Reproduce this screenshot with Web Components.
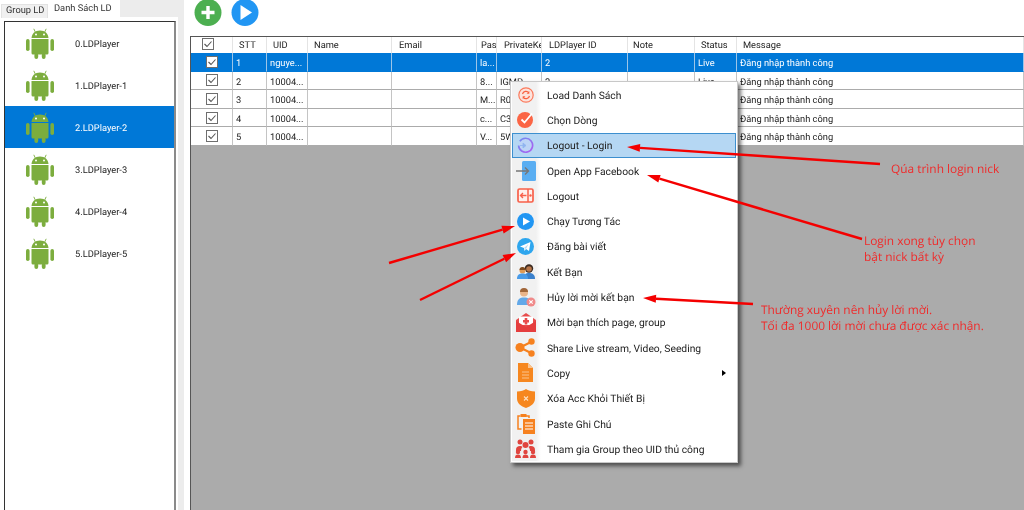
<!DOCTYPE html>
<html>
<head>
<meta charset="utf-8">
<style>
  html, body { margin: 0; height: 100%; overflow: hidden; background: #fff; }
  body { font: 9.3px Roboto, "Liberation Sans", sans-serif; color: #222; text-rendering: geometricPrecision; }
</style>
</head>
<body>
<app-window></app-window>
<template id="android">
  <svg width="28" height="31" viewBox="0 0 28 31" fill="#7cad3e">
    <rect x="0" y="11" width="3.6" height="12" rx="1.8"/>
    <rect x="24.4" y="11" width="3.6" height="12" rx="1.8"/>
    <path d="M5.500 11h17v14a1.500 1.500 0 0 1-1.500 1.500H7A1.500 1.500 0 0 1 5.500 25z"/>
    <rect x="8.4" y="25" width="3.8" height="6" rx="1.9"/>
    <rect x="15.8" y="25" width="3.8" height="6" rx="1.9"/>
    <path d="M5.500 10C5.800 5.500 9 2.500 14 2.500S22.200 5.500 22.500 10z"/>
    <path d="M9.500 4.500 7.800.8M18.500 4.500 20.200.8" stroke="#7cad3e" stroke-width=".9"/>
    <circle cx="10" cy="6.500" r="1" fill="#fff"/><circle cx="18" cy="6.500" r="1" fill="#fff"/>
  </svg>
</template>
<script>
const css = (s) => `<style>${s}</style>`;
const tick = `<svg width="12" height="12" viewBox="0 0 12 12"><rect x=".5" y=".5" width="11" height="11" fill="#fff" stroke="#6e6e6e"/><path d="M2.500 6l2.500 2.500 4.500-5" fill="none" stroke="#555" stroke-width="1.100"/></svg>`;

class LdItem extends HTMLElement {
  connectedCallback() {
    const root = this.attachShadow({ mode: "open" });
    root.innerHTML = css(`
      :host { display: grid; grid-template-columns: 70px 1fr; align-items: center; height: 42px; color: #222; }
      :host([selected]) { background: #0078d7; color: #fff; }
      .ic { display: grid; place-items: center; padding-right: 1px; line-height: 0; }
      .t { padding-top: 2px; }
    `) + `<div class="ic"></div><div class="t"><slot></slot></div>`;
    root.querySelector(".ic").appendChild(document.getElementById("android").content.cloneNode(true));
  }
}
customElements.define("ld-item", LdItem);

class LdSidebar extends HTMLElement {
  connectedCallback() {
    const root = this.attachShadow({ mode: "open" });
    root.innerHTML = css(`
      :host { display: flex; flex-direction: column; width: 178px; background: #fff; flex: none; }
      .tabs { display: flex; align-items: flex-end; height: 18px; background: #fff; flex: none; padding-left: 1px; }
      .tab { height: 14px; width: 47px; box-sizing: border-box; line-height: 12px; padding: 0 4px; white-space: nowrap; background: #f0f0f0; border: 1px solid #e2e2e2; border-bottom: 0; color: #333; }
      .tab.on { height: 18px; line-height: 17px; background: #fff; width: 72px; padding: 0 6px; border: 0; }
      .rest { height: 17px; align-self: flex-start; flex: 1; background: #ececec; }
      .body { flex: 1; padding: 3px 2px 0 4px; display: flex; }
      .list { flex: 1; border: 1px solid #333; border-right: 2px solid #8a8a8a; border-bottom: 0; background: #fff; }
    `) + `<div class="tabs"><div class="tab">Group LD</div><div class="tab on">Danh Sách LD</div><div class="rest"></div></div>
      <div class="body"><div class="list"><slot></slot></div></div>`;
  }
}
customElements.define("ld-sidebar", LdSidebar);

class LdRow extends HTMLElement {
  connectedCallback() {
    const root = this.attachShadow({ mode: "open" });
    const cells = (this.getAttribute("cells") || "").split("|");
    root.innerHTML = css(`
      :host { display: grid; grid-template-columns: 42px 34px 41px 84px 85px 20px 45px 86px 67px 42px 1fr; height: 18.6px; background: #fff; color: #222; }
      :host([head]) { height: 16px; }
      :host([selected]) { background: #0078d7; color: #fff; }
      div { border-right: 1px solid #c4c4c4; border-bottom: 1px solid #ababab; box-sizing: border-box; padding: 1px 0 0 3px; line-height: 19px; white-space: nowrap; overflow: hidden; }
      :host([head]) div { border-bottom: 0; border-right: 1px solid #e4e4e4; padding: 0 0 0 6px; line-height: 18px; }
      /* the style tag is the first child, so Email is 6, Pas 7 and so on */
      :host([head]) div:nth-child(6), :host([head]) div:nth-child(8), :host([head]) div:nth-child(9) { padding-left: 7px; }
      :host([head]) div:nth-child(7) { padding-left: 4px; }
      :host([head]) div:nth-child(10) { padding-left: 5px; }
      :host([selected]) div { border-right-color: #9cc5e8; border-bottom-color: #0078d7; }
      .c { display: grid; place-items: center; padding: 0; }
      :host([head]) .c { padding: 0 8px 2px 0; }
      svg { display: block; }
    `) + `<div class="c">${tick}</div>` + cells.map((c) => `<div>${c}</div>`).join("");
  }
}
customElements.define("ld-row", LdRow);

class LdGrid extends HTMLElement {
  connectedCallback() {
    const root = this.attachShadow({ mode: "open" });
    root.innerHTML = css(`
      :host { display: block; flex: 1; background: #ababab; border: 1px solid #555; border-right: 0; border-bottom: 0; }
    `) + `<slot></slot>`;
  }
}
customElements.define("ld-grid", LdGrid);

class LdMenuItem extends HTMLElement {
  connectedCallback() {
    const root = this.attachShadow({ mode: "open" });
    root.innerHTML = css(`
      :host { display: grid; grid-template-columns: 27px 1fr 14px; align-items: center; height: 25.300px; box-sizing: border-box; font-size: 10.3px; color: #222; }
      :host([hot]) { background: #b5d7f3; outline: 1px solid #3c8fcf; outline-offset: -1px; }
      .ic { display: grid; place-items: center; height: 100%; }
      .t { padding: 1px 0 0 8px; white-space: nowrap; }
      .arrow { width: 0; height: 0; border-left: 4px solid #000; border-top: 3.500px solid transparent; border-bottom: 3.500px solid transparent; }
    `) + `<div class="ic"><slot name="icon"></slot></div><div class="t"><slot></slot></div>` +
      (this.hasAttribute("sub") ? `<div class="arrow"></div>` : `<div></div>`);
  }
}
customElements.define("ld-menu-item", LdMenuItem);

class LdMenu extends HTMLElement {
  connectedCallback() {
    const root = this.attachShadow({ mode: "open" });
    root.innerHTML = css(`
      :host { display: block; position: absolute; left: 510px; top: 81px; width: 228px; background: #fff; border: 1px solid #c8c8c8; box-sizing: border-box; padding: 0 1px 1px; box-shadow: 3px 3px 4px rgba(0,0,0,.55); }
      .wrap { background: linear-gradient(90deg, #f1f1f1 0, #f1f1f1 24px, #fff 29px); }
    `) + `<div class="wrap"><slot></slot></div>`;
  }
}
customElements.define("ld-menu", LdMenu);

// annotations drawn over the screenshot: red arrows and notes
class LdNotes extends HTMLElement {
  connectedCallback() {
    const root = this.attachShadow({ mode: "open" });
    const arrows = [[880,164,627,147],[862,239,647,175],[753,304,643,298],[389,263,515,226],[420,300,516,253]];
    root.innerHTML = css(`
      :host { position: absolute; inset: 0; pointer-events: none; font: 11.900px "Open Sans", sans-serif; color: #ef2b2b; }
      svg { position: absolute; inset: 0; }
      p { position: absolute; margin: 0; line-height: 16px; white-space: nowrap; }
    `) + `<svg width="1024" height="510">${arrows.map(([x1,y1,x2,y2]) => {
        const a = Math.atan2(y2-y1, x2-x1), l = 13, w = 4;
        const bx = x2 - Math.cos(a)*l, by = y2 - Math.sin(a)*l;
        const nx = -Math.sin(a)*w, ny = Math.cos(a)*w;
        return `<line x1="${x1}" y1="${y1}" x2="${bx}" y2="${by}" stroke="#f40000" stroke-width="2.400"/><polygon points="${x2},${y2} ${bx+nx},${by+ny} ${bx-nx},${by-ny}" fill="#f40000"/>`;
      }).join("")}</svg>
      <p style="left:891px;top:161px">Qúa trình login nick</p>
      <p style="left:864px;top:233px">Login xong tùy chọn<br>bật nick bất kỳ</p>
      <p style="left:761px;top:302px">Thường xuyên nên hủy lời mời.<br>Tối đa 1000 lời mời chưa được xác nhận.</p>`;
  }
}
customElements.define("ld-notes", LdNotes);

const icons = {
  load: `<svg width="16" height="16" viewBox="0 0 16 16"><circle cx="8" cy="8" r="7.200" fill="#fde3dc" stroke="#fb7a5c" stroke-width="1.200"/><path d="M4.500 7a3.600 3.600 0 0 1 6.300-1.300M11.500 9a3.600 3.600 0 0 1-6.300 1.300" fill="none" stroke="#f8603f" stroke-width="1.200"/><path d="M11.300 4v2.700H8.600zM4.700 12V9.300h2.700z" fill="#f8603f"/></svg>`,
  check: `<svg width="17" height="17" viewBox="0 0 17 17"><circle cx="8" cy="9" r="8" fill="#fb6545"/><path d="M4.500 8.500l3 3 7.500-9" fill="none" stroke="#fff" stroke-width="1.800"/></svg>`,
  login: `<svg width="17" height="17" viewBox="0 0 17 17"><defs><linearGradient id="lg" x1="0" y1="0" x2="1" y2="1"><stop offset="0" stop-color="#6f8ef0"/><stop offset="1" stop-color="#b05cf0"/></linearGradient></defs><path d="M2.800 4.300a7 7 0 1 1-1.200 4.200" fill="#bcd4f6" stroke="url(#lg)" stroke-width="1.700"/><path d="M3 8.500h5M6 6l3 2.500L6 11z" fill="#8fb4f0" stroke="#8fb4f0" stroke-width=".8"/></svg>`,
  fb: `<svg width="20" height="20" viewBox="0 0 20 20"><rect x="6" y="0" width="14" height="20" rx="1.500" fill="#5aaef2"/><path d="M0 10h12M9 6.500l3.500 3.500L9 13.500" fill="none" stroke="#777" stroke-width="1.400"/></svg>`,
  logout: `<svg width="17" height="15" viewBox="0 0 17 15"><rect x="1" y="1" width="15" height="13" rx="1.500" fill="#fff0ec" stroke="#f8604a" stroke-width="1.700"/><path d="M11 1v13" stroke="#f8604a" stroke-width="1.500"/><circle cx="13.500" cy="7.500" r="1.200" fill="#f8604a"/><path d="M9.500 7.500H3.500M6 5 3.500 7.500 6 10" fill="none" stroke="#f8604a" stroke-width="1.400"/></svg>`,
  play: `<svg width="17" height="17" viewBox="0 0 17 17"><circle cx="8.500" cy="8.500" r="8.500" fill="#2196f3"/><path d="M6 4.500l7 4-7 4z" fill="#fff"/></svg>`,
  send: `<svg width="17" height="17" viewBox="0 0 17 17"><circle cx="8.500" cy="8.500" r="8.500" fill="#2ea6ee"/><path d="M3 8.500 13.500 4 12 13 9 11 7.500 13 7 10z" fill="#fff"/><path d="M7 10l4.500-4L9 11z" fill="#b9dcf4"/></svg>`,
  friends: `<svg width="18" height="15" viewBox="0 0 18 15"><circle cx="12" cy="4.500" r="4.200" fill="#3a2a20"/><circle cx="12" cy="5" r="2.800" fill="#b9774a"/><path d="M7 15c0-5 2-6 5-6s6 1 6 6z" fill="#3a80cc"/><circle cx="5.500" cy="6.500" r="3" fill="#e09a55"/><path d="M2.500 6a3 3 0 0 1 6 0z" fill="#7b4a1e"/><path d="M0 15c0-4 2-5.500 5.500-5.500S11 11 11 15z" fill="#4a9be8"/></svg>`,
  cancel: `<svg width="20" height="20" viewBox="0 0 20 20"><circle cx="8" cy="5.500" r="4" fill="#eab58a"/><path d="M4 5a4 4 0 0 1 8 0z" fill="#a0663a"/><path d="M1 18c0-6 3-7.500 7-7.500s7 1.500 7 7.500z" fill="#62a8e8"/><circle cx="15" cy="15" r="4.500" fill="#f08a8a"/><path d="M13.300 13.300l3.400 3.400M16.700 13.300l-3.400 3.400" stroke="#fff" stroke-width="1.100"/></svg>`,
  invite: `<svg width="20" height="19" viewBox="0 0 20 19"><path d="M0 7 10 0l10 7v12H0z" fill="#e84c4c"/><path d="M3 3.500h14V12H3z" fill="#fff"/><path d="M8.700 5h2.600v2H13v2.400h-1.700v2H8.700v-2H7V7h1.700z" fill="#e84c4c"/><path d="M0 8l10 6 10-6v11H0z" fill="#e53e3e"/></svg>`,
  share: `<svg width="21" height="19" viewBox="0 0 21 19"><path d="M5 9.500 16 4M5 9.500 16 15" stroke="#f6811f" stroke-width="2"/><circle cx="5" cy="9.500" r="4.500" fill="#f6811f"/><circle cx="16.500" cy="3.500" r="3.200" fill="#f6811f"/><circle cx="16.500" cy="15.500" r="3.200" fill="#f6811f"/></svg>`,
  copy: `<svg width="15" height="19" viewBox="0 0 15 19"><path d="M0 0h10l5 5v14H0z" fill="#f6871f"/><path d="M10 0l5 5h-5z" fill="#fbc38e"/><path d="M4 9h7M4 12h7M4 15h7" stroke="#fbc38e" stroke-width="1"/></svg>`,
  shield: `<svg width="18" height="19" viewBox="0 0 18 19"><path d="M9 0c2 1.500 5 2.500 9 2.500V9.500c0 5-4 7.500-9 9.500-5-2-9-4.500-9-9.500V2.500C4 2.500 7 1.500 9 0z" fill="#f6871f"/><path d="M7 7.500l4 4M11 7.500l-4 4" stroke="#fde0c2" stroke-width="1.100"/></svg>`,
  paste: `<svg width="18" height="20" viewBox="0 0 18 20"><path d="M4.500 15H1V2h2.500M9 2h3v2" fill="none" stroke="#f6811f" stroke-width="1.500"/><rect x="3.500" y="0" width="6" height="3" fill="#f6811f"/><rect x="6" y="5" width="12" height="15" fill="#f6811f"/><path d="M8 9h8M8 12h8M8 15h8" stroke="#fff" stroke-width="1.100"/></svg>`,
  group: `<svg width="21" height="19" viewBox="0 0 21 19" fill="#e0453f"><circle cx="5" cy="3" r="2.500"/><circle cx="16" cy="3" r="2.500"/><circle cx="10.500" cy="6" r="3"/><path d="M1 11c0-3 1.500-4 4-4 1 0 2 .3 2.500 1C6.500 9 6 10 6 12H1zM20 11c0-3-1.500-4-4-4-1 0-2 .3-2.500 1 1 1 1.500 2 1.500 4h5z"/><circle cx="3" cy="13" r="2.200"/><circle cx="18" cy="13" r="2.200"/><path d="M0 19c0-2.500 1-3.500 3-3.500s3 1 3 3.500zM15 19c0-2.500 1-3.500 3-3.500s3 1 3 3.500z"/><circle cx="10.500" cy="13" r="2.200"/><path d="M7.500 19c0-2.500 1-3.500 3-3.500s3 1 3 3.500z"/></svg>`
};

const menu = [
  ["load","Load Danh Sách"],["check","Chọn Dòng"],["login","Logout - Login","hot"],["fb","Open App Facebook"],["logout","Logout"],
  ["play","Chạy Tương Tác"],["send","Đăng bài viết"],["friends","Kết Bạn"],["cancel","Hủy lời mời kết bạn"],["invite","Mời bạn thích page, group"],
  ["share","Share Live stream, Video, Seeding"],["copy","Copy","sub"],["shield","Xóa Acc Khỏi Thiết Bị"],["paste","Paste Ghi Chú"],["group","Tham gia Group theo UID thủ công"]
];
const rows = [
  ["1","nguye...","","","la...","","2","","Live","Đăng nhập thành công"],
  ["2","10004...","","","8...","IGMP","2","","Live","Đăng nhập thành công"],
  ["3","10004...","","","M...","R0","","","","Đăng nhập thành công"],
  ["4","10004...","","","c...","C3","","","","Đăng nhập thành công"],
  ["5","10004...","","","V...","5W","","","","Đăng nhập thành công"]
];
const names = ["0.LDPlayer","1.LDPlayer-1","2.LDPlayer-2","3.LDPlayer-3","4.LDPlayer-4","5.LDPlayer-5"];

class AppWindow extends HTMLElement {
  connectedCallback() {
    const root = this.attachShadow({ mode: "open" });
    const head = "STT|UID|Name|Email|Pas|PrivateKe|LDPlayer ID|Note|Status|Message";
    root.innerHTML = css(`
      :host { display: flex; position: relative; width: 1024px; height: 510px; overflow: hidden; filter: blur(.3px); }
      .split { width: 6px; flex: none; background: #ececec; }
      .main { flex: 1; display: flex; flex-direction: column; background: #fff; padding-left: 6px; }
      .tools { height: 36px; flex: none; display: flex; gap: 9px; padding: 0 0 0 4px; align-items: flex-start; }
      .tools svg { display: block; margin-top: -1px; }
    `) + `
      <ld-sidebar>${names.map((n, i) => `<ld-item ${i === 2 ? "selected" : ""}>${n}</ld-item>`).join("")}</ld-sidebar>
      <div class="split"></div>
      <div class="main">
        <div class="tools">
          <svg width="28" height="27" viewBox="0 0 28 27"><circle cx="14" cy="13.500" r="13.500" fill="#4caf50"/><path d="M14 7v13M7.500 13.500h13" stroke="#fff" stroke-width="3.400"/></svg>
          <svg width="28" height="27" viewBox="0 0 28 27"><circle cx="14" cy="13.500" r="13.500" fill="#2196f3"/><path d="M9.500 6 21 13.500 9.500 21z" fill="#fff"/></svg>
        </div>
        <ld-grid>
          <ld-row head cells="${head}"></ld-row>
          ${rows.map((r, i) => `<ld-row ${i === 0 ? "selected" : ""} cells="${r.join("|")}"></ld-row>`).join("")}
        </ld-grid>
      </div>
      <ld-menu>${menu.map(([ic, t, f]) => `<ld-menu-item ${f || ""}><span slot="icon" style="display:block;line-height:0">${icons[ic]}</span>${t}</ld-menu-item>`).join("")}</ld-menu>
      <ld-notes></ld-notes>`;
  }
}
customElements.define("app-window", AppWindow);
</script>
</body>
</html>
